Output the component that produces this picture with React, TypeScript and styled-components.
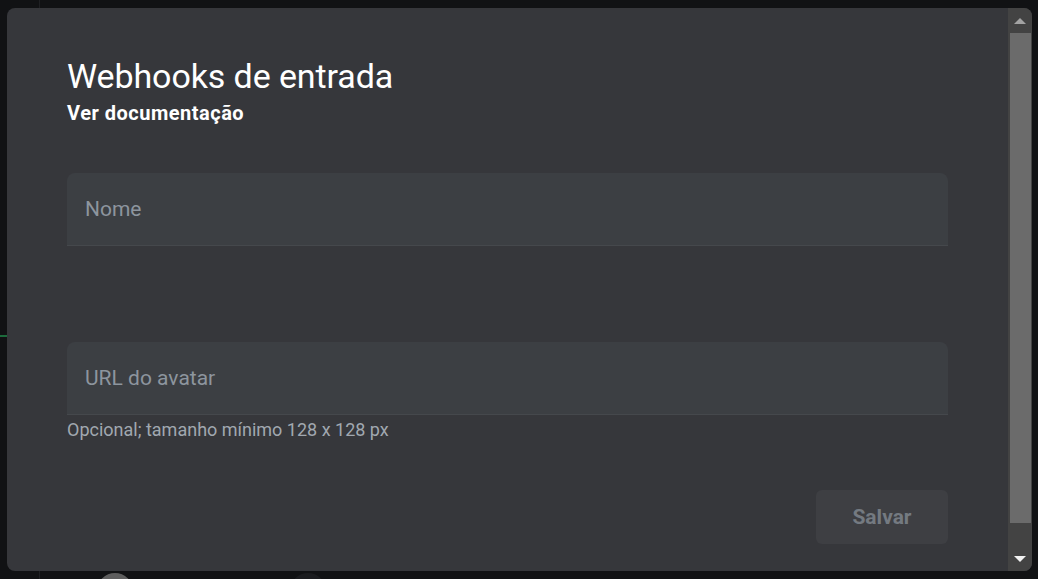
import React, { FC } from 'react';
import styled, { createGlobalStyle } from 'styled-components';

const GlobalStyle = createGlobalStyle`
  html, body {
    margin: 0;
    padding: 0;
    height: 100%;
    background: #111214;
    font-family: Roboto, "Liberation Sans", sans-serif;
    overflow: hidden;
  }
  #root {
    height: 100%;
  }
`;

const Backdrop = styled.div`
  position: relative;
  width: 1038px;
  height: 579px;
  display: flex;
  overflow: hidden;
  background: #111214;
`;

const Rail = styled.div`
  width: 39px;
  flex-shrink: 0;
  border-right: 1px solid #1f2023;
`;

const RailMark = styled.div`
  height: 2px;
  margin-top: 335px;
  background: #1c6b3c;
`;

const Avatar = styled.div<{ tone: string; left: number }>`
  position: absolute;
  bottom: -30px;
  left: ${({ left }): number => left}px;
  width: 36px;
  height: 36px;
  border-radius: 50%;
  background: ${({ tone }): string => tone};
`;

const Dialog = styled.section`
  position: absolute;
  top: 8px;
  left: 7px;
  width: 1025px;
  height: 563px;
  display: flex;
  border-radius: 8px;
  overflow: hidden;
  background: #36373b;
`;

const Body = styled.div`
  flex: 1;
  display: flex;
  flex-direction: column;
  padding: 48px 60px 0 60px;
`;

const Title = styled.h1`
  margin: 0;
  font-size: 34px;
  line-height: 40px;
  font-weight: 400;
  color: #ffffff;
  letter-spacing: -0.1px;
`;

const DocLink = styled.a`
  display: block;
  margin-top: 4px;
  font-size: 20px;
  line-height: 26px;
  font-weight: 700;
  color: #ffffff;
  text-decoration: none;
  letter-spacing: 0.5px;
`;

const Form = styled.div`
  display: flex;
  flex-direction: column;
  margin-top: 47px;
`;

const Field = styled.div<{ gap?: number }>`
  display: flex;
  flex-direction: column;
  margin-bottom: ${({ gap }): number => gap || 0}px;
`;

const Input = styled.input`
  height: 73px;
  box-sizing: border-box;
  padding: 0 18px;
  border: none;
  border-bottom: 1px solid #45484c;
  border-radius: 8px 8px 0 0;
  background: #3c3f43;
  color: #e8eaed;
  font-family: Roboto, "Liberation Sans", sans-serif;
  font-size: 21px;
  outline: none;

  &::placeholder {
    color: #8d959e;
  }
`;

const Helper = styled.div`
  min-height: 22px;
  padding-top: 4px;
  font-size: 18px;
  line-height: 22px;
  color: #a1a8b0;
`;

const Actions = styled.div`
  display: flex;
  justify-content: flex-end;
  margin-top: 49px;
`;

const SaveButton = styled.button`
  width: 132px;
  height: 54px;
  border: none;
  border-radius: 6px;
  background: #3e3f43;
  color: #747a81;
  font-family: Roboto, "Liberation Sans", sans-serif;
  font-size: 21px;
  font-weight: 700;
`;

const Scrollbar = styled.div`
  width: 24px;
  flex-shrink: 0;
  display: flex;
  flex-direction: column;
  background: #434343;
`;

const ScrollArrow = styled.div<{ down?: boolean }>`
  height: 25px;
  display: flex;
  align-items: center;
  justify-content: center;

  &::after {
    content: '';
    width: 0;
    height: 0;
    border-left: 6px solid transparent;
    border-right: 6px solid transparent;
    ${({ down }): string =>
      down ? 'border-top: 6px solid #f2f2f2;' : 'border-bottom: 6px solid #a3a3a3;'}
  }
`;

const Thumb = styled.div`
  height: 490px;
  margin: 0 1px 0 2px;
  background: #6b6b6b;
`;

const TrackRest = styled.div`
  flex: 1;
`;

const App: FC = () => {
  return (
    <>
      <GlobalStyle />
      <Backdrop>
        <Rail>
          <RailMark />
        </Rail>
        <Avatar tone="#5e5e5e" left={97} />
        <Avatar tone="#1b1c1f" left={290} />
        <Dialog>
          <Body>
            <Title>Webhooks de entrada</Title>
            <DocLink href="#">Ver documentação</DocLink>
            <Form>
              <Field gap={70}>
                <Input placeholder="Nome" />
                <Helper />
              </Field>
              <Field>
                <Input placeholder="URL do avatar" />
                <Helper>Opcional; tamanho mínimo 128 x 128 px</Helper>
              </Field>
            </Form>
            <Actions>
              <SaveButton disabled>Salvar</SaveButton>
            </Actions>
          </Body>
          <Scrollbar>
            <ScrollArrow />
            <Thumb />
            <TrackRest />
            <ScrollArrow down />
          </Scrollbar>
        </Dialog>
      </Backdrop>
    </>
  );
};

export default App;
